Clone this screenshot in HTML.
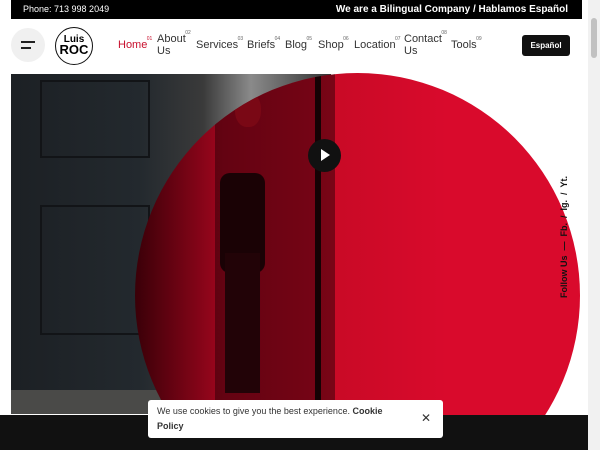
<!DOCTYPE html>
<html><head><style>
*{margin:0;padding:0;box-sizing:border-box}
html,body{width:600px;height:450px;overflow:hidden}
body{background:#fff;font-family:"Liberation Sans",sans-serif}
#w{position:relative;width:600px;height:450px;overflow:hidden}
.abs{position:absolute}
.nav a{position:absolute;font-size:11px;color:#333;line-height:12px}
.nav sup{position:absolute;font-size:5px;color:#666;top:-6px;right:-5px}
</style></head><body><div id="w">
<div class="abs" style="left:588px;top:0;width:12px;height:450px;background:#f1f1f1"></div>
<div class="abs" style="left:591px;top:18px;width:6px;height:40px;background:#c1c1c1;border-radius:3px"></div>
<div class="abs" style="left:11px;top:0;width:571px;height:19px;background:#000;color:#fff;font-size:9px;line-height:19px">
<span style="position:absolute;left:12px">Phone: 713 998 2049</span>
<span style="position:absolute;right:14px;font-weight:bold;font-size:10px">We are a Bilingual Company / Hablamos Español</span></div>
<div class="abs" style="left:11px;top:28px;width:34px;height:34px;border-radius:50%;background:#f0f0f0"></div>
<div class="abs" style="left:21px;top:41px;width:14px;height:1.5px;background:#222"></div>
<div class="abs" style="left:21px;top:47px;width:10px;height:1.5px;background:#222"></div>
<div class="abs" style="left:55px;top:27px;width:38px;height:38px;border-radius:50%;border:1.5px solid #111;text-align:center;font-weight:bold;font-size:10px;line-height:10px;padding-top:7px;font-family:'Liberation Sans Narrow','Liberation Sans',sans-serif">Luis<br><span style="font-size:13px">ROC</span></div>
<div class="nav">
<a style="left:118px;top:39px;color:#c8102e">Home<sup style="color:#c8102e">01</sup></a>
<a style="left:157px;top:33px">About<br>Us<sup>02</sup></a>
<a style="left:196px;top:39px">Services<sup>03</sup></a>
<a style="left:247px;top:39px">Briefs<sup>04</sup></a>
<a style="left:285px;top:39px">Blog<sup>05</sup></a>
<a style="left:318px;top:39px">Shop<sup>06</sup></a>
<a style="left:354px;top:39px">Location<sup>07</sup></a>
<a style="left:404px;top:33px">Contact<br>Us<sup>08</sup></a>
<a style="left:451px;top:39px">Tools<sup>09</sup></a>
</div>
<div class="abs" style="left:522px;top:35px;width:48px;height:21px;background:#111;color:#fff;font-size:8px;font-weight:bold;line-height:21px;text-align:center;border-radius:3px">Español</div>
<div class="abs" style="left:11px;top:74px;width:320px;height:340px;background:linear-gradient(90deg,#1c2024 0%,#23292e 40%,#3a3a3a 60%,#8a8a8a 75%,#333 100%)"></div>
<div class="abs" style="left:40px;top:80px;width:110px;height:78px;border:2px solid #121417"></div>
<div class="abs" style="left:40px;top:205px;width:110px;height:130px;border:2px solid #121417"></div>
<div class="abs" style="left:11px;top:390px;width:180px;height:24px;background:#4a4a48"></div>
<div class="abs" style="left:0;top:0;width:600px;height:416px;overflow:hidden">
<div class="abs" style="left:135px;top:73px;width:445px;height:445px;border-radius:50%;background:linear-gradient(90deg,#3a0008 0%,#a0061e 20%,#c90a26 45%,#d90a2c 70%,#d90a2c 100%);overflow:hidden">
<div class="abs" style="left:80px;top:0;width:120px;height:340px;background:rgba(40,0,5,.5)"></div>
<div class="abs" style="left:85px;top:100px;width:45px;height:100px;background:#1a0205;border-radius:10px"></div>
<div class="abs" style="left:90px;top:180px;width:35px;height:140px;background:#220307"></div>
<div class="abs" style="left:100px;top:20px;width:26px;height:34px;background:#7a0815;border-radius:45%"></div>
<div class="abs" style="left:180px;top:0;width:6px;height:345px;background:#150204"></div>
</div></div>
<div class="abs" style="left:308px;top:139px;width:33px;height:33px;border-radius:50%;background:#111"></div>
<div class="abs" style="left:321px;top:149px;width:0;height:0;border-left:9px solid #fff;border-top:6px solid transparent;border-bottom:6px solid transparent"></div>
<div class="abs" style="left:558px;top:298px;transform:rotate(-90deg);transform-origin:0 0;white-space:nowrap;font-size:9px;font-weight:bold;color:#111;line-height:12px">Follow Us &nbsp;— &nbsp;Fb. &nbsp;/ &nbsp;Ig. &nbsp;/ &nbsp;Yt.</div>
<div class="abs" style="left:0;top:415px;width:588px;height:35px;background:#111"></div>
<div class="abs" style="left:148px;top:400px;width:295px;height:38px;background:#fff;border-radius:3px;font-size:9px;color:#333;line-height:15px;padding:4px 9px">We use cookies to give you the best experience. <b>Cookie<br>Policy</b>
<span style="position:absolute;right:12px;top:11px;font-size:12px">✕</span></div>
</div></body></html>
